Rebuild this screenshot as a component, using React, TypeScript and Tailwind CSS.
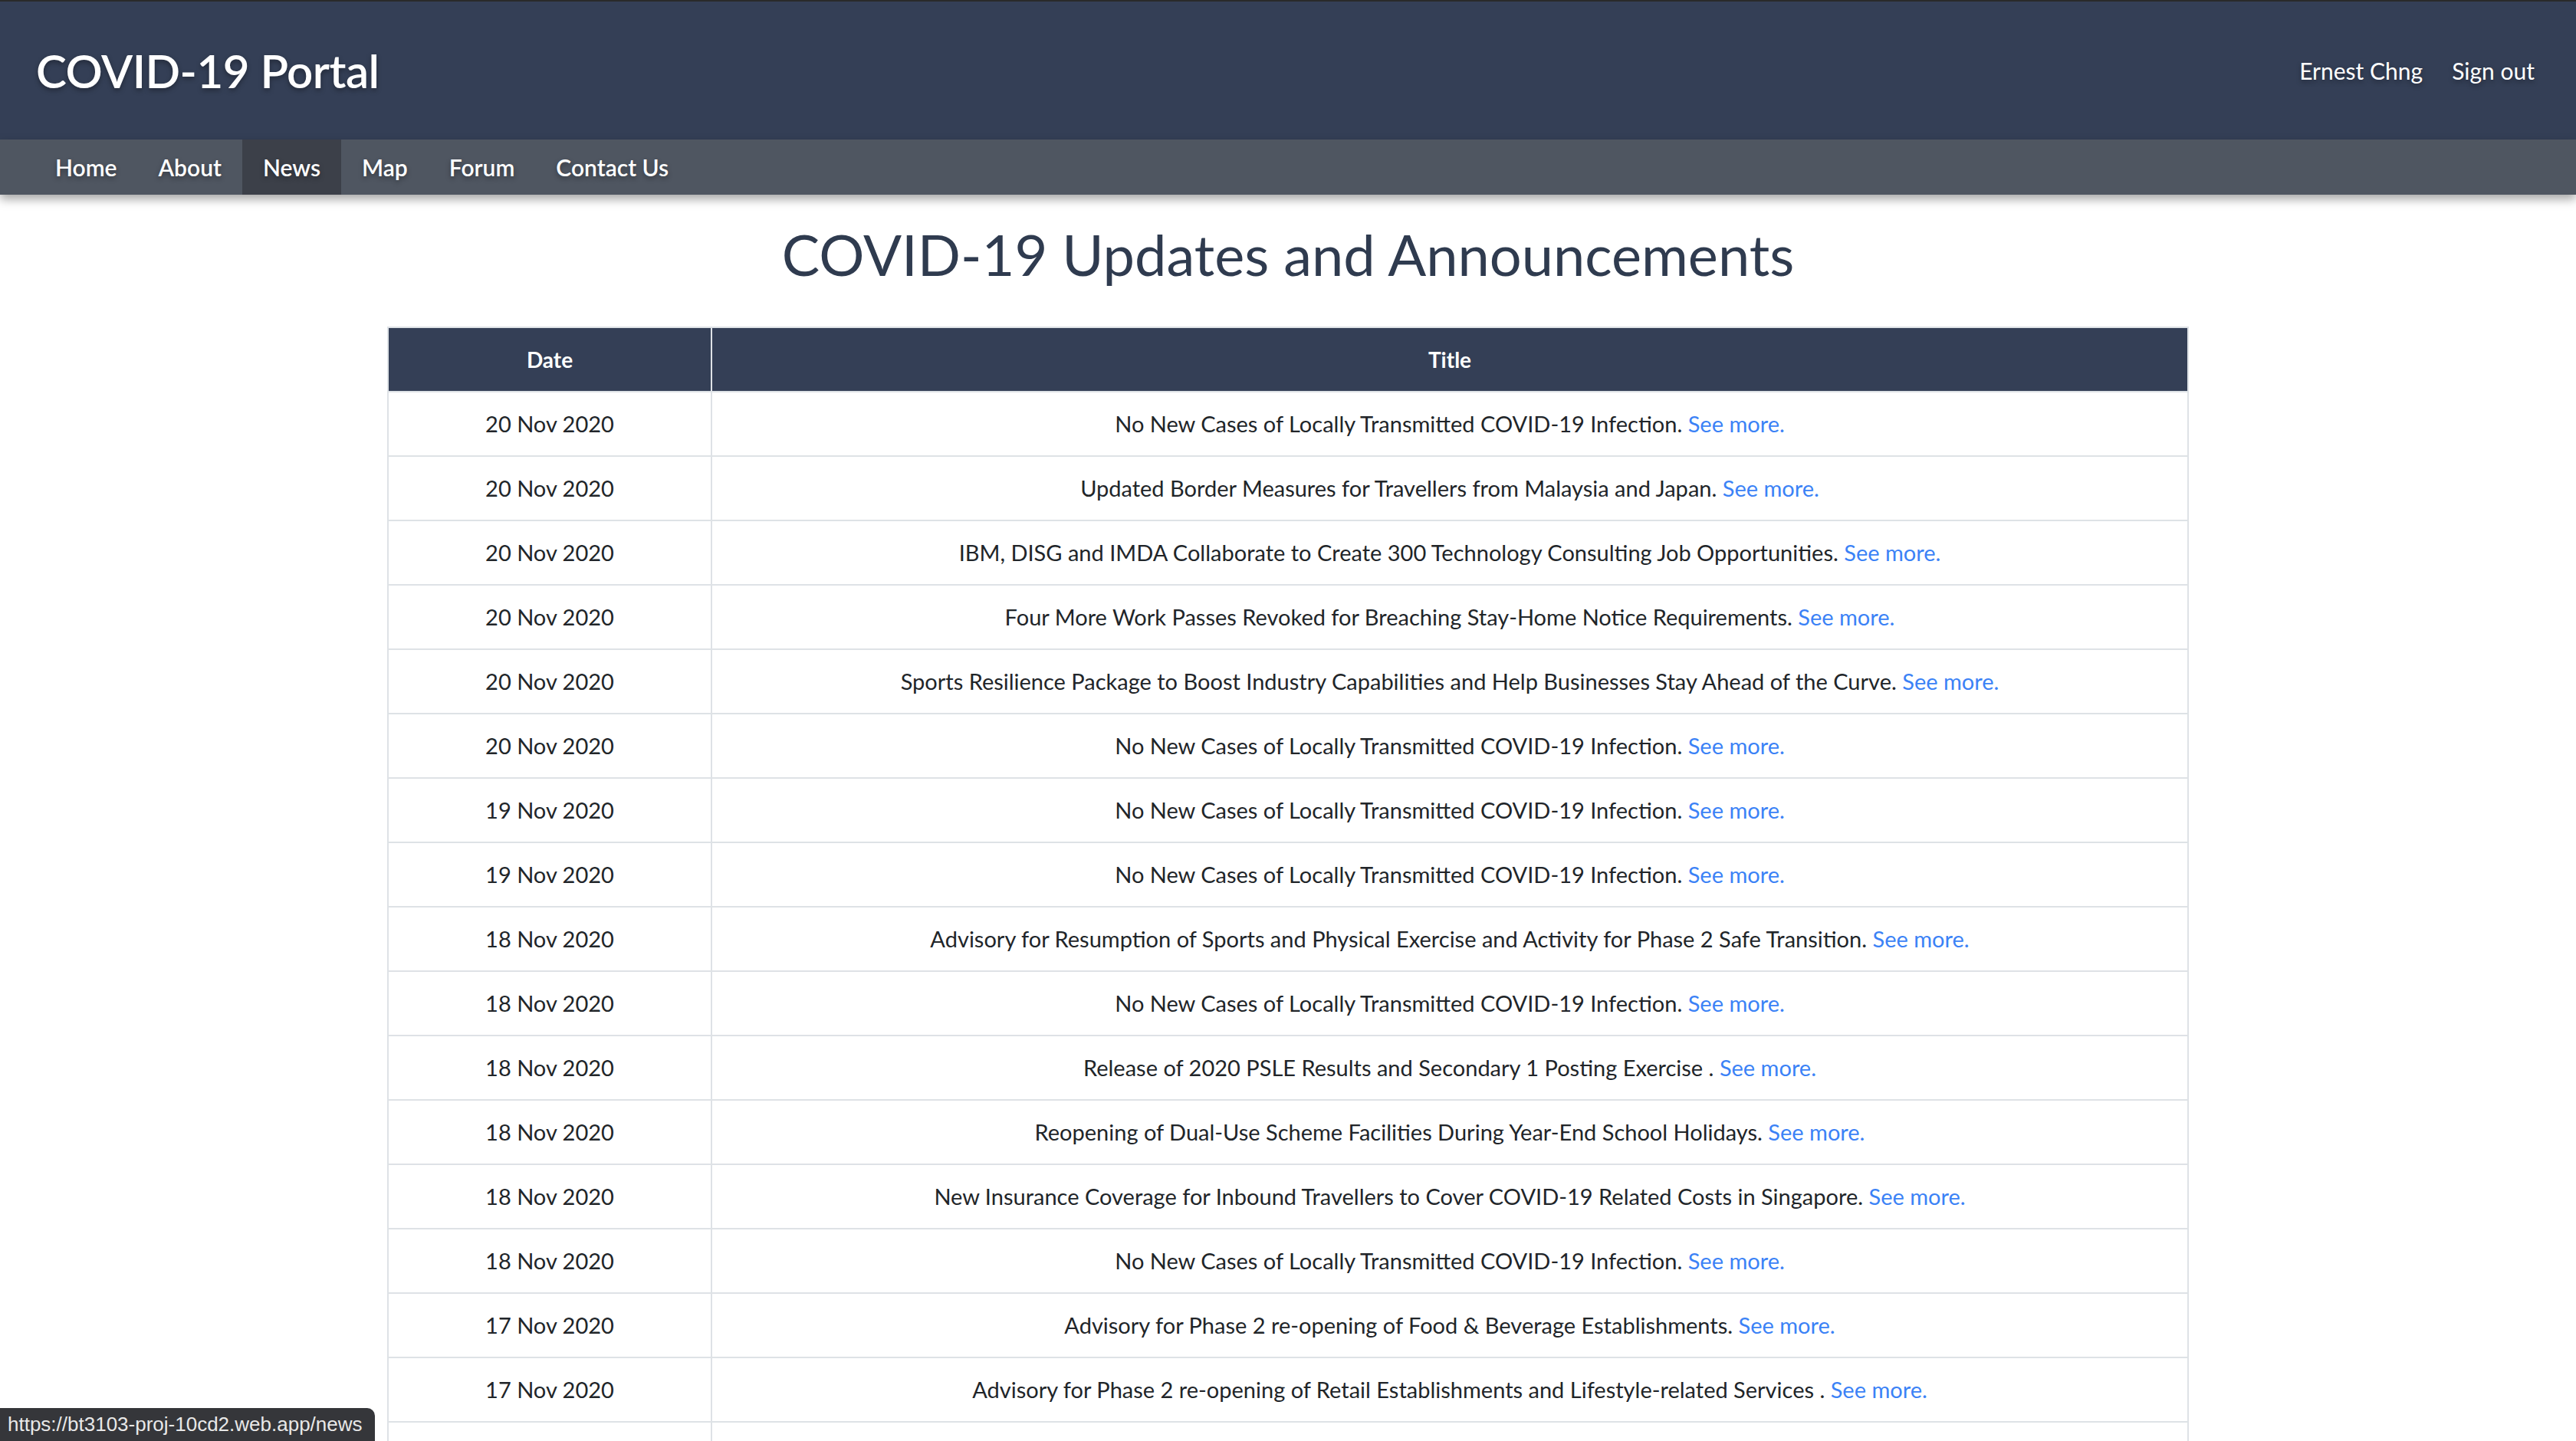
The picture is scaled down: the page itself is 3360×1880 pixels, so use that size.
const navItems = ["Home", "About", "News", "Map", "Forum", "Contact Us"]

const noCases = "No New Cases of Locally Transmitted COVID-19 Infection."

const news = [
  { date: "20 Nov 2020", title: noCases },
  { date: "20 Nov 2020", title: "Updated Border Measures for Travellers from Malaysia and Japan." },
  { date: "20 Nov 2020", title: "IBM, DISG and IMDA Collaborate to Create 300 Technology Consulting Job Opportunities." },
  { date: "20 Nov 2020", title: "Four More Work Passes Revoked for Breaching Stay-Home Notice Requirements." },
  {
    date: "20 Nov 2020",
    title: "Sports Resilience Package to Boost Industry Capabilities and Help Businesses Stay Ahead of the Curve.",
  },
  { date: "20 Nov 2020", title: noCases },
  { date: "19 Nov 2020", title: noCases },
  { date: "19 Nov 2020", title: noCases },
  {
    date: "18 Nov 2020",
    title: "Advisory for Resumption of Sports and Physical Exercise and Activity for Phase 2 Safe Transition.",
  },
  { date: "18 Nov 2020", title: noCases },
  { date: "18 Nov 2020", title: "Release of 2020 PSLE Results and Secondary 1 Posting Exercise ." },
  { date: "18 Nov 2020", title: "Reopening of Dual-Use Scheme Facilities During Year-End School Holidays." },
  {
    date: "18 Nov 2020",
    title: "New Insurance Coverage for Inbound Travellers to Cover COVID-19 Related Costs in Singapore.",
  },
  { date: "18 Nov 2020", title: noCases },
  { date: "17 Nov 2020", title: "Advisory for Phase 2 re-opening of Food & Beverage Establishments." },
  {
    date: "17 Nov 2020",
    title: "Advisory for Phase 2 re-opening of Retail Establishments and Lifestyle-related Services .",
  },
]

export default function App() {
  return (
    <div className="relative h-screen overflow-hidden bg-white font-['Lato','Noto_Sans',sans-serif]">
      {/* Top bar */}
      <header className="flex h-[182px] items-center justify-between border-t-2 border-[#2a2a2a] bg-[#343f56] pl-[47px] pr-[54px] text-white">
        <h1 className="text-[60px] font-semibold tracking-[-0.5px] [text-shadow:0_3px_6px_rgba(0,0,0,0.35)]">
          COVID-19 Portal
        </h1>
        <div className="flex gap-[38px] text-[30px] [text-shadow:0_3px_6px_rgba(0,0,0,0.35)]">
          <a href="#">Ernest Chng</a>
          <a href="#">Sign out</a>
        </div>
      </header>

      {/* Nav */}
      <nav className="relative z-10 flex h-[72px] bg-[#4f5661] pl-[45px] shadow-[0_6px_12px_rgba(0,0,0,0.35)]">
        {navItems.map((item) => (
          <a
            key={item}
            href="#"
            className={`flex items-center px-[27px] text-[30px] font-semibold text-white [text-shadow:0_3px_6px_rgba(0,0,0,0.35)] ${
              item === "News" ? "bg-[#3c4049]" : ""
            }`}
          >
            {item}
          </a>
        ))}
      </nav>

      <main>
        <h2 className="mt-[34px] mb-[50px] text-center text-[74px] leading-[88px] text-[#2f3b4f]">
          COVID-19 Updates and Announcements
        </h2>

        <table className="mx-auto w-[2350px] border-collapse border-2 border-[#dee2e6] text-[29px] text-[#212529]">
          <thead>
            <tr className="h-[84px] bg-[#343f56] text-[28px] text-white">
              <th className="w-[422px] border-2 border-[#dee2e6] border-t-0 border-l-0 font-bold">Date</th>
              <th className="border-2 border-[#dee2e6] border-t-0 border-r-0 font-bold">Title</th>
            </tr>
          </thead>
          <tbody>
            {news.map((row, i) => (
              <tr key={i} className="h-[84px]">
                <td className="border-2 border-[#dee2e6] text-center">{row.date}</td>
                <td className="border-2 border-[#dee2e6] text-center">
                  {row.title}{" "}
                  <a href="#" className="text-[#3b82f6]">
                    See more.
                  </a>
                </td>
              </tr>
            ))}
            <tr className="h-[84px]">
              <td className="border-2 border-[#dee2e6]"></td>
              <td className="border-2 border-[#dee2e6]"></td>
            </tr>
          </tbody>
        </table>
      </main>

      {/* Browser status bubble */}
      <div className="absolute bottom-0 left-0 flex h-[43px] items-center rounded-tr-[10px] bg-[#35363a] pl-[10px] pr-[16px] font-['Liberation_Sans',sans-serif] text-[26px] text-[#e8e8e8]">
        https://bt3103-proj-10cd2.web.app/news
      </div>
    </div>
  )
}
